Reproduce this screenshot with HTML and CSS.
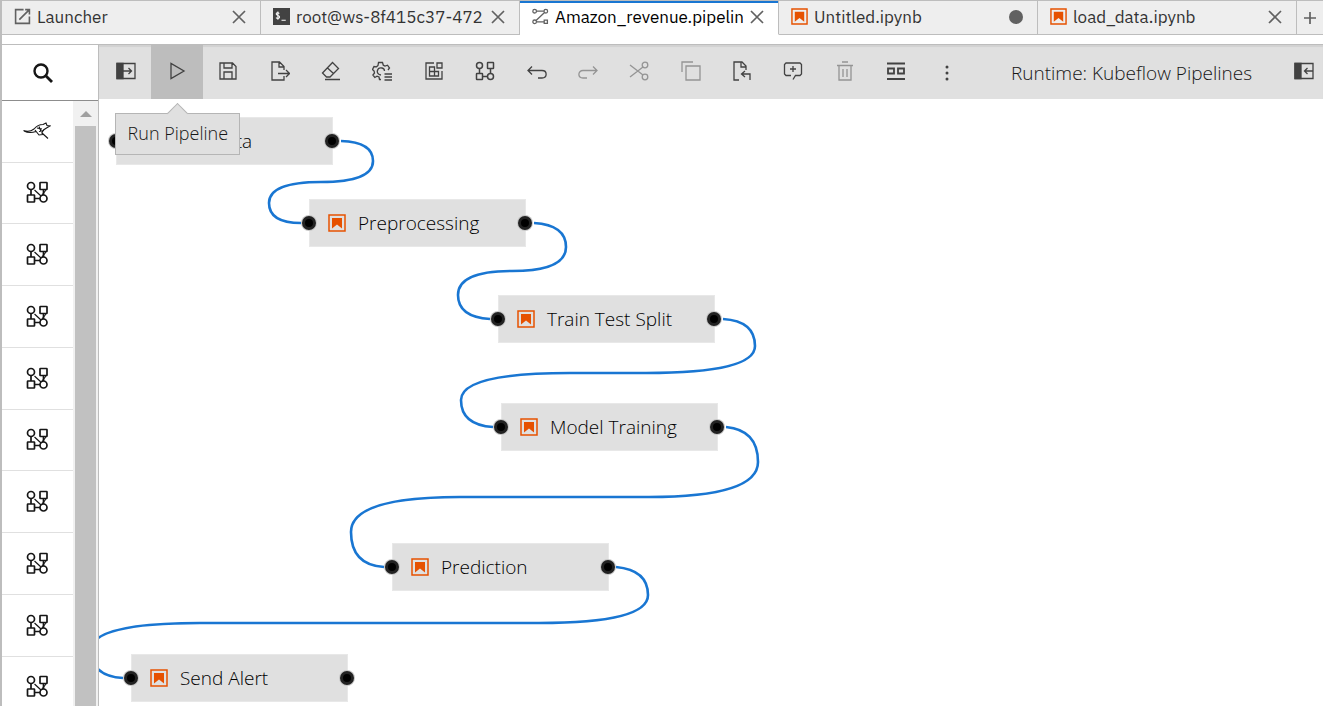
FILE: index.html
```html
<!DOCTYPE html>
<html lang="en">
<head>
<meta charset="utf-8">
<title>Amazon_revenue.pipeline</title>
<link rel="stylesheet" href="styles.css">
</head>
<body>
<svg class="defs" aria-hidden="true">
  <symbol id="notebook" viewBox="0 0 18 18">
    <path d="M1 1h16v16H1z" fill="none" stroke="#e65100" stroke-width="1.5"/>
    <path d="M4 4h10v10.500l-5-4-5 4z" fill="#e65100"/>
  </symbol>
  <symbol id="close" viewBox="0 0 16 16">
    <path d="M2 2l12 12M14 2L2 14" fill="none" stroke="#616161" stroke-width="1.7"/>
  </symbol>
  <symbol id="nodes" viewBox="0 0 20 20">
    <g fill="none" stroke="currentColor" stroke-width="1.5">
      <circle cx="4.500" cy="4.500" r="3"/><rect x="12.500" y="1.500" width="6" height="6" rx=".5"/>
      <rect x="1.500" y="12.500" width="6" height="6" rx=".5"/><circle cx="15.500" cy="15.500" r="3"/>
      <path d="M4.500 7.500v5M15.500 7.500v5M7.500 15.500h5"/>
    </g>
  </symbol>
  <symbol id="component" viewBox="0 0 22 22">
    <g fill="none" stroke="currentColor" stroke-width="1.700">
      <circle cx="5" cy="5" r="3.500"/><rect x="14" y="1.500" width="7" height="7" rx=".5"/>
      <rect x="1.500" y="14" width="7" height="7" rx=".5"/><circle cx="17.500" cy="17.500" r="3.500"/>
      <path d="M5 8.500V14M8.500 17.500H14M17.500 8.500V14"/><path d="M8.500 9l6.500 6M20 9l-4 5" stroke-width="1.200"/>
    </g>
  </symbol>
</svg>
<div class="app">
  <div class="tabs" role="tablist">
    <div class="tab">
      <svg class="tab-icon" viewBox="0 0 16 16"><path d="M9 1.500H1.500v13h13V8M5 11L14 2M10.500 1.500h4v4.500" fill="none" stroke="#616161" stroke-width="1.500"/></svg>
      <button class="tab-label" role="tab">Launcher</button>
      <button class="tab-close" aria-label="Close"><svg><use href="#close"/></svg></button>
    </div>
    <div class="tab">
      <svg class="tab-icon" viewBox="0 0 16 16"><path d="M0 0h16v16H0z" fill="#424242"/><path d="M6 5.200C5 4 3 4.300 3 5.700c0 1.600 3.200 1 3.200 2.700C6.200 10 4 10.200 2.800 9M4.600 3.200v7.800M8 11.500h4" fill="none" stroke="#fff"/></svg>
      <button class="tab-label" role="tab">root@ws-8f415c37-472</button>
      <button class="tab-close" aria-label="Close"><svg><use href="#close"/></svg></button>
    </div>
    <div class="tab tab-active">
      <svg class="tab-icon" viewBox="0 0 16 16"><g fill="none" stroke="#616161" stroke-width="1.200"><circle cx="2.500" cy="3" r="1.700"/><circle cx="13" cy="3" r="1.700"/><circle cx="2.500" cy="13" r="1.700"/><path d="M11.500 11.500h3v3h-3zM4.200 3h7M11.800 4.200L3.800 11.800M4.200 13h7.300"/></g></svg>
      <button class="tab-label" role="tab" aria-selected="true">Amazon_revenue.pipeline</button>
      <button class="tab-close" aria-label="Close"><svg><use href="#close"/></svg></button>
    </div>
    <div class="tab">
      <svg class="tab-icon"><use href="#notebook"/></svg>
      <button class="tab-label" role="tab">Untitled.ipynb</button>
      <button class="tab-close" aria-label="Close, unsaved changes"><svg viewBox="0 0 16 16"><circle cx="8" cy="8" r="7" fill="#616161"/></svg></button>
    </div>
    <div class="tab">
      <svg class="tab-icon"><use href="#notebook"/></svg>
      <button class="tab-label" role="tab">load_data.ipynb</button>
      <button class="tab-close" aria-label="Close"><svg><use href="#close"/></svg></button>
    </div>
    <button class="tab-add" aria-label="New launcher"><svg viewBox="0 0 14 14"><path d="M7 1v12M1 7h12" stroke="#616161" stroke-width="1.700"/></svg></button>
  </div>

  <div class="editor">
    <aside class="palette">
      <button class="search" aria-label="Search"><svg viewBox="0 0 20 20"><circle cx="8" cy="8" r="6.500" fill="none" stroke="#161616" stroke-width="2.400"/><path d="M12.800 12.800l6.200 6.200" stroke="#161616" stroke-width="2.800"/></svg></button>
      <div class="palette-body">
        <div class="palette-list">
          <button class="palette-item" aria-label="Papermill"><svg class="bird" viewBox="0 0 28 18"><path d="M.5 8.500c4 1.500 8 .5 10.500-1.500 2-2.500 5-4.500 9-4.500M1 9c5 2.500 9 1.500 12 .5M20 2.500l3-1.500 1 2.500 3 .5-3.500 2-3 2-2 3.500M19 11l6 5.500M12 8l4 5 4-.5M14 6l5 1M16 9.500l5-1M16 4.500l2 5" fill="none" stroke="#161616" stroke-width="1.100"/></svg></button>
          <button class="palette-item" aria-label="Component"><svg><use href="#component"/></svg></button>
          <button class="palette-item" aria-label="Component"><svg><use href="#component"/></svg></button>
          <button class="palette-item" aria-label="Component"><svg><use href="#component"/></svg></button>
          <button class="palette-item" aria-label="Component"><svg><use href="#component"/></svg></button>
          <button class="palette-item" aria-label="Component"><svg><use href="#component"/></svg></button>
          <button class="palette-item" aria-label="Component"><svg><use href="#component"/></svg></button>
          <button class="palette-item" aria-label="Component"><svg><use href="#component"/></svg></button>
          <button class="palette-item" aria-label="Component"><svg><use href="#component"/></svg></button>
          <button class="palette-item" aria-label="Component"><svg><use href="#component"/></svg></button>
        </div>
        <div class="scrollbar"><svg viewBox="0 0 12 6"><path d="M6 0l6 6H0z" fill="#a0a0a0"/></svg><div class="thumb"></div></div>
      </div>
    </aside>

    <main class="main">
      <div class="toolbar">
        <div class="actions">
          <button class="action" aria-label="Open palette"><svg viewBox="0 0 20 20"><path d="M1 2.500h18v15H1z"/><path d="M1 2.500h6v15H1z" fill="currentColor"/><path d="M7 10h8.500M12.500 7l3 3-3 3"/></svg></button>
          <button class="action action-hover" aria-label="Run Pipeline"><svg viewBox="0 0 20 20"><path d="M4 2.500v15L17 10z"/></svg>
            <span class="tooltip" role="tooltip">Run Pipeline</span></button>
          <button class="action" aria-label="Save"><svg viewBox="0 0 20 20"><path d="M2 2h12.500L18 5.500V18H2zM6 2v5h8V2M6 18v-7h8v7"/></svg></button>
          <button class="action" aria-label="Export"><svg viewBox="0 0 20 20"><path d="M14 15v4H2V1h7.500L14 5.500V9M9 1v5h5M8 12.500h11.500M16 9l3.500 3.500L16 16"/></svg></button>
          <button class="action" aria-label="Clear"><svg viewBox="0 0 20 20"><path d="M1.500 12L11.500 1.500 17.500 7.500 9 16H5.500zM6.500 7l6 5.500M4 18.500h15"/></svg></button>
          <button class="action" aria-label="Properties"><svg viewBox="0 0 20 20"><path d="M9 18.500H7.500L7 16l-2-.8-2.200 1.300L.9 14l1.600-2-.4-2L.5 8.500 2 5.500l2.500.3L6 4.500l.5-3h4l.8 2.700 1.700.8 2.500-.8L17.500 7 16 9M9 14c-6-1-4-8 1-7 2 .5 2.500 2 2.500 3M12.500 13H20M12.500 16H20M12.500 19H20"/></svg></button>
          <button class="action" aria-label="Open components"><svg viewBox="0 0 20 20"><path d="M10 2H2v16h16v-8M13 2h5v5h-5zM5.500 6h5v9h-5zM5.500 10.500h9V15h-9"/></svg></button>
          <button class="action" aria-label="Open runtimes"><svg><use href="#nodes"/></svg></button>
          <button class="action" aria-label="Undo"><svg viewBox="0 0 20 20"><path d="M5 5.500L1 9.500l4 4M1 9.500h14c5.500 0 5.500 7.500 0 7.500H11"/></svg></button>
          <button class="action action-off" aria-label="Redo" disabled><svg viewBox="0 0 20 20"><path d="M15 5.500l4 4-4 4M19 9.500H5c-5.500 0-5.500 7.500 0 7.500h4"/></svg></button>
          <button class="action action-off" aria-label="Cut" disabled><svg viewBox="0 0 20 20"><circle cx="16" cy="4" r="2.800"/><circle cx="16" cy="16" r="2.800"/><path d="M14 6L1 16M14 14L1 4"/></svg></button>
          <button class="action action-off" aria-label="Copy" disabled><svg viewBox="0 0 20 20"><path d="M5 5h14v14H5zM1 11V1h11"/></svg></button>
          <button class="action" aria-label="Paste"><svg viewBox="0 0 20 20"><path d="M7 19H2V1h8l4 4v4M9 1v5h5M13 10l-3.500 3 3.500 3M10 13h8v6"/></svg></button>
          <button class="action" aria-label="Add comment"><svg viewBox="0 0 20 20"><path d="M10 18.500l2.500-4H17l1.500-1.500V3.500L17 2H3L1.500 3.500V13L3 14.500h5M10 5v6M7 8h6"/></svg></button>
          <button class="action action-off" aria-label="Delete" disabled><svg viewBox="0 0 20 20"><path d="M2 4.500h16M4 4.500V19h12V4.500M7 1h6M8 8v8M12 8v8"/></svg></button>
          <button class="action" aria-label="Arrange"><svg viewBox="0 0 20 20"><path d="M1 2.500h18M1 18h18M2 7.500h6v5H2zM12 7.500h6v5h-6z" stroke-width="1.800"/></svg></button>
          <button class="action" aria-label="More"><svg viewBox="0 0 20 20"><g fill="currentColor" stroke="none"><circle cx="10" cy="6" r="1.500"/><circle cx="10" cy="12" r="1.500"/><circle cx="10" cy="18" r="1.500"/></g></svg></button>
        </div>
        <div class="runtime">
          <span>Runtime: Kubeflow Pipelines</span>
          <button class="panel" aria-label="Open panel"><svg viewBox="0 0 20 20"><path d="M1 2.500h18v15H1z"/><path d="M1 2.500h6v15H1z" fill="currentColor"/><path d="M19 10h-8.500M13.500 7l-3 3 3 3"/></svg></button>
        </div>
      </div>

      <div class="canvas">
        <div class="node load"><span class="port port-in"></span><svg><use href="#notebook"/></svg><span>Load Data</span><span class="port port-out"></span></div>
        <div class="node prep"><span class="port port-in"></span><svg><use href="#notebook"/></svg><span>Preprocessing</span><span class="port port-out"></span></div>
        <div class="node split"><span class="port port-in"></span><svg><use href="#notebook"/></svg><span>Train Test Split</span><span class="port port-out"></span></div>
        <div class="node train"><span class="port port-in"></span><svg><use href="#notebook"/></svg><span>Model Training</span><span class="port port-out"></span></div>
        <div class="node predict"><span class="port port-in"></span><svg><use href="#notebook"/></svg><span>Prediction</span><span class="port port-out"></span></div>
        <div class="node alert"><span class="port port-in"></span><svg><use href="#notebook"/></svg><span>Send Alert</span><span class="port port-out"></span></div>
        <svg class="links"><g transform="translate(-99 -99)" fill="none" stroke="#1976d2" stroke-width="2.600">
          <path d="M341 141Q373 142 373 161Q373 182 321 182Q269 182 269 203Q269 223 301 223"/>
          <path d="M534 223Q566 225 566 247Q566 271 512 271Q458 271 458 295Q458 317 490 319"/>
          <path d="M723 319Q755 321 755 346Q755 373 646 373H570Q461 373 461 400Q461 425 493 427"/>
          <path d="M726 427Q758 430 758 462Q758 497 649 497H460Q351 497 351 532Q351 565 384 567"/>
          <path d="M616 567Q648 570 648 595Q648 623 539 623H200Q91 623 91 650Q91 676 123 678"/>
        </g></svg>
      </div>
    </main>
  </div>
</div>
</body>
</html>
```
FILE: styles.css
```css
* { box-sizing: border-box; }
body { margin: 0; font-family: "Open Sans", "Noto Sans", sans-serif; color: #161616; background: #fff; }
button { padding: 0; border: 0; background: none; font: inherit; color: inherit; }
svg { display: block; flex: none; }
.defs { position: absolute; width: 0; height: 0; }
.app { display: flex; flex-direction: column; height: 100vh; overflow: hidden; border-left: 2px solid #bdbdbd; }

.tabs { display: flex; flex: none; height: 35px; overflow: hidden; background: #eee; border-top: 1px solid #bdbdbd; }
.tab { display: flex; align-items: center; flex: 0 0 259px; min-width: 0; gap: 6px; padding: 0 13px 2px 12px; border-right: 1px solid #bdbdbd; border-bottom: 1px solid #bdbdbd; background: #eee; }
.tab-active { background: #fff; border-bottom-color: #fff; box-shadow: inset 0 2px #1976d2; }
.tab-icon { width: 17px; height: 17px; }
.tab-label { flex: 1; min-width: 0; overflow: hidden; font-family: "IBM Plex Sans", Roboto, sans-serif; font-size: 17px; line-height: 24px; text-align: left; white-space: nowrap; color: #333; }
.tab-active .tab-label { color: #000; }
.tab-close svg { width: 16px; height: 16px; }
.tab:first-child { flex-basis: 259px; }
.tab-add { flex: 1; display: grid; place-items: center; border-bottom: 1px solid #bdbdbd; }
.tab-add svg { width: 14px; height: 14px; }

.editor { display: flex; flex: 1; min-height: 0; margin-top: 9px; border-top: 1px solid #bdbdbd; }
.palette { display: flex; flex-direction: column; width: 97px; flex: none; border-right: 1px solid #bdbdbd; }
.search { display: grid; place-items: center; flex: none; height: 56px; padding-right: 14px; border-bottom: 1px solid #8d8d8d; }
.search svg { width: 20px; height: 20px; }
.palette-body { display: flex; flex: 1; min-height: 0; }
.palette-list { flex: 1; display: grid; grid-auto-rows: 62px 61px 62px 62px; overflow: hidden; }
.palette-item { display: grid; place-items: center; padding: 0 1px 2px 0; border-bottom: 1px solid #e0e0e0; }
.palette-item svg { width: 22px; height: 22px; }
.palette-item .bird { width: 28px; height: 18px; }
.scrollbar { display: flex; flex-direction: column; width: 25px; padding: 10px 2px 0; gap: 9px; background: #f1f1f1; }
.scrollbar svg { width: 12px; height: 6px; align-self: center; }
.thumb { flex: 1; background: #c1c1c1; }

.main { display: flex; flex-direction: column; flex: 1; min-width: 0; }
.toolbar { display: flex; flex: none; height: 54px; background: #e0e0e0; box-shadow: inset 0 2px 1px #d2d2d2; }
.actions { display: flex; flex: 1; min-width: 0; padding-left: 1px; }
.action { position: relative; display: grid; place-items: center; flex: 1; min-width: 0; padding-bottom: 2px; color: #424242; }
.action > svg, .panel svg { width: 20px; height: 20px; fill: none; stroke: currentColor; stroke-width: 1.3; }
.action-hover { background: #bdbdbd; }
.action-off { color: #949494; }
.tooltip { position: absolute; z-index: 3; top: 68px; left: -36px; width: 125px; height: 42px; border: 1px solid #b5b5b5; background: #e0e0e0; font-size: 18px; line-height: 38px; font-weight: 300; text-align: center; white-space: nowrap; color: #161616; }
.tooltip::before { content: ""; position: absolute; top: -8px; left: 54px; width: 14px; height: 14px; border: solid #b5b5b5; border-width: 1px 0 0 1px; background: #e0e0e0; transform: rotate(45deg); }
.runtime { display: flex; align-items: center; justify-content: space-between; flex: 0 0 350px; padding: 2px 9px 0 38px; font-size: 19px; white-space: nowrap; font-weight: 300; }
.panel { padding-bottom: 4px; color: #424242; }

.canvas { position: relative; flex: 1; overflow: hidden; background: #fff; }
.node { position: absolute; display: flex; align-items: center; gap: 12px; width: 217px; height: 48px; padding-left: 18px; border: 1px solid #e8e8e8; background: #e0e0e0; font-size: 19px; font-weight: 300; color: #000; }
.node > svg { width: 18px; height: 18px; }
.load { left: 17px; top: 18px; }
.prep { left: 210px; top: 100px; }
.split { left: 399px; top: 196px; }
.train { left: 402px; top: 304px; }
.predict { left: 293px; top: 444px; }
.alert { left: 32px; top: 555px; }
.port { position: absolute; top: 16px; width: 14px; height: 14px; border-radius: 50%; background: #000; border: 3px solid #222; box-shadow: 0 0 0 1px #c6c6c6; }
.port-in { left: -8px; }
.port-out { right: -7px; }
.links { position: absolute; inset: 0; width: 100%; height: 100%; pointer-events: none; }
```
